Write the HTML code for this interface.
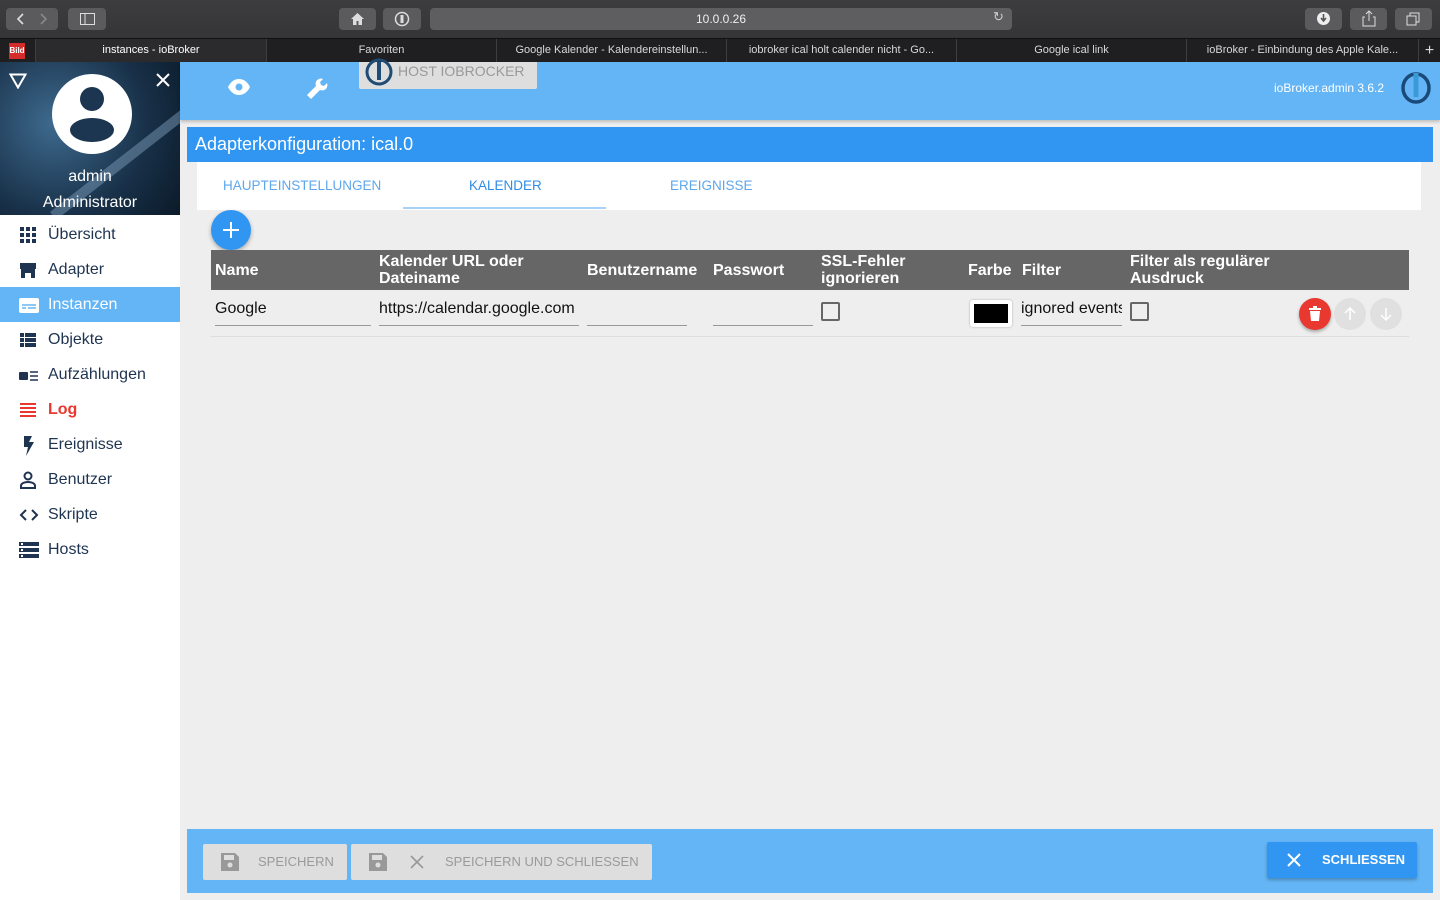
<!DOCTYPE html>
<html><head><meta charset="utf-8"><style>
*{box-sizing:border-box;margin:0;padding:0}
body{width:1440px;height:900px;overflow:hidden;background:#eeeeee;font-family:"Liberation Sans",sans-serif;position:relative}
.abs{position:absolute}
.tb{left:0;top:0;width:1440px;height:38px;background:linear-gradient(#3d3d3f,#353537)}
.btn{background:#5b5b5d;border-radius:4px;height:22px;top:8px}
.tabs{left:0;top:38px;width:1440px;height:24px;background:#1f1f21;border-top:1px solid #111}
.tab{top:0;height:24px;color:#d8d8d8;font-size:11px;text-align:center;line-height:23px;border-left:1px solid #3e3e40}
.side{left:0;top:62px;width:180px;height:838px;background:#fff}
.hdr{left:0;top:0;width:180px;height:153px;background:radial-gradient(circle at 30% 40%,#3e6a8e,#183048 60%,#0b1a28);overflow:hidden}
.mi{left:0;width:180px;height:35px;font-size:16px;color:#1e3450;line-height:35px;padding-left:48px}
.mi svg{position:absolute;left:19px;top:9px}
.appbar{left:180px;top:62px;width:1260px;height:58px;background:#64b5f6;box-shadow:0 2px 3px rgba(0,0,0,.2)}
.th{color:#fff;font-weight:bold;font-size:16px;line-height:17px;top:250px;height:40px;display:flex;align-items:center}
.inp{border-bottom:1px solid #999;height:36px;top:290px;font-size:16px;line-height:38px;color:#111;white-space:nowrap;overflow:hidden}
.cb{width:19px;height:19px;border:2px solid #666;border-radius:2px;top:302px}
.fb{background:#dedede;border-radius:2px;height:36px;top:844px;color:#9a9a9a;font-size:13px;line-height:36px}
</style></head><body>
<div class="abs tb">
 <div class="abs btn" style="left:6px;width:52px"></div>
 <svg class="abs" style="left:14px;top:12px" width="40" height="14"><path d="M9 2L4 7l5 5" stroke="#ddd" stroke-width="1.6" fill="none"/><path d="M27 2l5 5-5 5" stroke="#888" stroke-width="1.6" fill="none"/></svg>
 <div class="abs btn" style="left:68px;width:38px"></div>
 <svg class="abs" style="left:80px;top:13px" width="15" height="12"><rect x=".5" y=".5" width="14" height="11" fill="none" stroke="#ddd"/><line x1="5" y1="0" x2="5" y2="12" stroke="#ddd"/></svg>
 <div class="abs btn" style="left:339px;width:37px"></div>
 <svg class="abs" style="left:350px;top:12px" width="15" height="14"><path d="M7.5 1L1 7h2v6h3.5V9h2v4H12V7h2z" fill="#ddd"/></svg>
 <div class="abs btn" style="left:383px;width:38px"></div>
 <svg class="abs" style="left:394px;top:11px" width="16" height="16"><circle cx="8" cy="8" r="6.5" fill="none" stroke="#ddd" stroke-width="1.5"/><rect x="6.5" y="4" width="3" height="8" fill="#ddd"/></svg>
 <div class="abs btn" style="left:430px;width:582px;background:#5e5e60"></div>
 <div class="abs" style="left:430px;width:582px;top:8px;line-height:22px;text-align:center;color:#eee;font-size:12px">10.0.0.26</div>
 <div class="abs" style="left:993px;top:9px;color:#ccc;font-size:13px">↻</div>
 <div class="abs btn" style="left:1305px;width:37px"></div>
 <svg class="abs" style="left:1316px;top:11px" width="15" height="15"><circle cx="7.5" cy="7.5" r="6.5" fill="#eee"/><path d="M7.5 3v6M5 7l2.5 3 2.5-3" stroke="#555" stroke-width="1.6" fill="none"/></svg>
 <div class="abs btn" style="left:1350px;width:37px"></div>
 <svg class="abs" style="left:1362px;top:10px" width="14" height="17"><path d="M7 1v10M4 4l3-3 3 3M3 7H1v9h12V7h-2" stroke="#ddd" fill="none"/></svg>
 <div class="abs btn" style="left:1395px;width:37px"></div>
 <svg class="abs" style="left:1406px;top:12px" width="15" height="14"><rect x="1" y="4" width="9" height="9" fill="none" stroke="#ddd"/><path d="M4 4V1h9v9h-3" fill="none" stroke="#ddd"/></svg>
</div>
<div class="abs tabs">
 <div class="abs" style="left:9px;top:4px;width:16px;height:16px;background:#d42b2b;color:#fff;font-size:8px;font-weight:bold;text-align:center;line-height:16px">Bild</div>
 <div class="abs tab" style="left:35px;width:231px;background:#2b2b2d;color:#fff">instances - ioBroker</div>
 <div class="abs tab" style="left:266px;width:230px">Favoriten</div>
 <div class="abs tab" style="left:496px;width:230px">Google Kalender - Kalendereinstellun...</div>
 <div class="abs tab" style="left:726px;width:230px">iobroker ical holt calender nicht - Go...</div>
 <div class="abs tab" style="left:956px;width:230px">Google ical link</div>
 <div class="abs tab" style="left:1186px;width:232px">ioBroker - Einbindung des Apple Kale...</div>
 <div class="abs tab" style="left:1418px;width:22px;font-size:16px">+</div>
</div>
<div class="abs side">
 <div class="abs hdr">
  <div class="abs" style="left:50px;width:260px;height:10px;background:#7a9ab5;transform:rotate(-38deg);transform-origin:0 0;top:150px;opacity:.5"></div>
  <svg class="abs" style="left:9px;top:11px" width="18" height="16"><path d="M1.5 1.5h15L9 14.5z" fill="none" stroke="#fff" stroke-width="2"/></svg>
  <svg class="abs" style="left:155px;top:10px" width="16" height="16"><path d="M2 2l12 12M14 2L2 14" stroke="#fff" stroke-width="2"/></svg>
  <svg class="abs" style="left:52px;top:12px" width="80" height="80"><circle cx="40" cy="40" r="40" fill="#fff"/><circle cx="40" cy="25" r="12" fill="#1c3550"/><ellipse cx="40" cy="56" rx="22" ry="12" fill="#1c3550"/></svg>
  <div class="abs" style="left:0;width:180px;top:106px;text-align:center;color:#fff;font-size:16px">admin</div>
  <div class="abs" style="left:0;width:180px;top:132px;text-align:center;color:#fff;font-size:16px">Administrator</div>
 </div>
 <div class="abs mi" style="top:155px"><svg width="18" height="18"><g fill="#1e3450"><rect x="1" y="1" width="4" height="4"/><rect x="7" y="1" width="4" height="4"/><rect x="13" y="1" width="4" height="4"/><rect x="1" y="7" width="4" height="4"/><rect x="7" y="7" width="4" height="4"/><rect x="13" y="7" width="4" height="4"/><rect x="1" y="13" width="4" height="4"/><rect x="7" y="13" width="4" height="4"/><rect x="13" y="13" width="4" height="4"/></g></svg>Übersicht</div>
 <div class="abs mi" style="top:190px"><svg width="18" height="18"><path d="M1 2h16v6H1zM2 8h14v9h-4v-5H6v5H2z" fill="#1e3450"/></svg>Adapter</div>
 <div class="abs mi" style="top:225px;background:#64b5f6;color:#fff"><svg width="20" height="18"><rect x="0" y="2" width="20" height="15" rx="2" fill="#fff"/><path d="M3 9h14M3 12h4M9 12h8" stroke="#64b5f6" stroke-width="1.5"/></svg>Instanzen</div>
 <div class="abs mi" style="top:260px"><svg width="18" height="18"><g fill="#1e3450"><rect x="1" y="2" width="4" height="4"/><rect x="6" y="2" width="11" height="4"/><rect x="1" y="7" width="4" height="4"/><rect x="6" y="7" width="11" height="4"/><rect x="1" y="12" width="4" height="4"/><rect x="6" y="12" width="11" height="4"/></g></svg>Objekte</div>
 <div class="abs mi" style="top:295px"><svg width="20" height="18"><rect x="0" y="6" width="9" height="8" rx="1" fill="#1e3450"/><path d="M11 6h8M11 10h8M11 14h8" stroke="#1e3450" stroke-width="1.5"/></svg>Aufzählungen</div>
 <div class="abs mi" style="top:330px;color:#e8382f;font-weight:bold"><svg width="18" height="18"><path d="M1 3h16M1 7h16M1 11h16M1 15h16" stroke="#e8382f" stroke-width="2"/></svg>Log</div>
 <div class="abs mi" style="top:365px"><svg width="18" height="20"><path d="M5 0h8l-3 6h5L7 20l2-9H5z" fill="#1e3450"/></svg>Ereignisse</div>
 <div class="abs mi" style="top:400px"><svg width="18" height="18"><circle cx="9" cy="5" r="3.5" fill="none" stroke="#1e3450" stroke-width="2"/><path d="M2 17v-2c0-3 4-4 7-4s7 1 7 4v2z" fill="none" stroke="#1e3450" stroke-width="2"/></svg>Benutzer</div>
 <div class="abs mi" style="top:435px"><svg width="20" height="18"><path d="M7 4L2 9l5 5M13 4l5 5-5 5" fill="none" stroke="#1e3450" stroke-width="2"/></svg>Skripte</div>
 <div class="abs mi" style="top:470px"><svg width="20" height="18"><g fill="#1e3450"><rect x="0" y="1" width="20" height="4"/><rect x="0" y="7" width="20" height="4"/><rect x="0" y="13" width="20" height="4"/></g><g fill="#fff"><rect x="2" y="2" width="2" height="2"/><rect x="2" y="8" width="2" height="2"/><rect x="2" y="14" width="2" height="2"/></g></svg>Hosts</div>
</div>
<div class="abs appbar">
 <svg class="abs" style="left:47px;top:16px" width="24" height="18"><path d="M1 9C4 3 8 1 12 1s8 2 11 8c-3 6-7 8-11 8S4 15 1 9z" fill="#fff"/><circle cx="12" cy="9" r="3.5" fill="#64b5f6"/></svg>
 <svg class="abs" style="left:124px;top:14px" width="24" height="24"><path d="M3 19l9-9c-1-3 0-6 3-7 2-1 3 0 4 0l-3 3 1 3 3 1 3-3c0 1 1 2 0 4-1 3-4 4-7 3l-9 9z" fill="#fff"/></svg>
 <div class="abs" style="left:179px;top:0;width:178px;height:27px;background:#dedede;border-radius:0 0 2px 2px"></div>
 <svg class="abs" style="left:185px;top:-4px" width="28" height="28"><circle cx="14" cy="14" r="12" fill="none" stroke="#1e4c75" stroke-width="3"/><rect x="12" y="4" width="4" height="18" fill="#1e4c75"/></svg>
 <div class="abs" style="left:218px;top:1px;font-size:14px;color:#999">HOST IOBROCKER</div>
 <div class="abs" style="left:1094px;top:19px;font-size:12px;color:#fff">ioBroker.admin 3.6.2</div>
 <svg class="abs" style="left:1220px;top:9px" width="32" height="34"><ellipse cx="16" cy="17" rx="13" ry="14" fill="none" stroke="#1a4a78" stroke-width="3.5"/><rect x="13.5" y="2" width="5" height="24" fill="#3a9ad8"/></svg>
</div>
<div class="abs" style="left:187px;top:127px;width:1246px;height:35px;background:#3196f2;color:#fff;font-size:18px;line-height:35px;padding-left:8px">Adapterkonfiguration: ical.0</div>
<div class="abs" style="left:197px;top:162px;width:1224px;height:48px;background:#fff"></div>
<div class="abs" style="left:223px;top:178px;font-size:13.5px;color:#5ea7ec">HAUPTEINSTELLUNGEN</div>
<div class="abs" style="left:469px;top:178px;font-size:13.5px;color:#2f8de8">KALENDER</div>
<div class="abs" style="left:670px;top:178px;font-size:13.5px;color:#5ea7ec">EREIGNISSE</div>
<div class="abs" style="left:403px;top:207px;width:203px;height:2px;background:#a8d1f7"></div>
<div class="abs" style="left:211px;top:210px;width:40px;height:40px;border-radius:50%;background:#3196f2;box-shadow:0 2px 4px rgba(0,0,0,.3)"></div>
<svg class="abs" style="left:221px;top:220px" width="20" height="20"><path d="M10 2v16M2 10h16" stroke="#fff" stroke-width="2"/></svg>
<div class="abs" style="left:211px;top:250px;width:1198px;height:40px;background:#666"></div>
<div class="abs th" style="left:215px">Name</div>
<div class="abs th" style="left:379px">Kalender URL oder<br>Dateiname</div>
<div class="abs th" style="left:587px">Benutzername</div>
<div class="abs th" style="left:713px">Passwort</div>
<div class="abs th" style="left:821px">SSL-Fehler<br>ignorieren</div>
<div class="abs th" style="left:968px">Farbe</div>
<div class="abs th" style="left:1022px">Filter</div>
<div class="abs th" style="left:1130px">Filter als regulärer<br>Ausdruck</div>
<div class="abs inp" style="left:215px;width:156px">Google</div>
<div class="abs inp" style="left:379px;width:200px">https://calendar.google.com</div>
<div class="abs inp" style="left:587px;width:100px"></div>
<div class="abs inp" style="left:713px;width:100px"></div>
<div class="abs cb" style="left:821px"></div>
<div class="abs" style="left:970px;top:300px;width:42px;height:27px;background:#fff;border-radius:3px;box-shadow:0 0 2px #aaa;padding:4px"><div style="background:#000;width:100%;height:100%"></div></div>
<div class="abs inp" style="left:1021px;width:101px">ignored events</div>
<div class="abs cb" style="left:1130px"></div>
<div class="abs" style="left:1299px;top:298px;width:32px;height:32px;border-radius:50%;background:#e8382f;box-shadow:0 2px 3px rgba(0,0,0,.3)"></div>
<svg class="abs" style="left:1308px;top:306px" width="14" height="16"><rect x="1" y="2" width="12" height="2" fill="#fff"/><rect x="5" y="0" width="4" height="2" fill="#fff"/><path d="M2 5h10l-1 10H3z" fill="#fff"/></svg>
<div class="abs" style="left:1334px;top:298px;width:32px;height:32px;border-radius:50%;background:#e0e0e0"></div>
<div class="abs" style="left:1370px;top:298px;width:32px;height:32px;border-radius:50%;background:#e0e0e0"></div>
<svg class="abs" style="left:1342px;top:306px" width="16" height="16"><path d="M8 14V2M3 7l5-5 5 5" stroke="#fff" stroke-width="1.5" fill="none"/></svg>
<svg class="abs" style="left:1378px;top:306px" width="16" height="16"><path d="M8 2v12M3 9l5 5 5-5" stroke="#fff" stroke-width="1.5" fill="none"/></svg>
<div class="abs" style="left:211px;top:336px;width:1198px;height:1px;background:#ddd"></div>
<div class="abs" style="left:187px;top:829px;width:1246px;height:64px;background:#64b5f6"></div>
<div class="abs fb" style="left:203px;width:144px"><svg class="abs" style="left:18px;top:9px" width="18" height="18"><path d="M0 0h14l4 4v14H0z" fill="#999"/><rect x="3" y="2" width="10" height="5" fill="#dedede"/><circle cx="9" cy="12" r="2.5" fill="#dedede"/></svg><span class="abs" style="left:55px">SPEICHERN</span></div>
<div class="abs fb" style="left:351px;width:301px"><svg class="abs" style="left:18px;top:9px" width="18" height="18"><path d="M0 0h14l4 4v14H0z" fill="#999"/><rect x="3" y="2" width="10" height="5" fill="#dedede"/><circle cx="9" cy="12" r="2.5" fill="#dedede"/></svg><svg class="abs" style="left:59px;top:11px" width="14" height="14"><path d="M1 1l12 12M13 1L1 13" stroke="#999" stroke-width="1.6"/></svg><span class="abs" style="left:94px">SPEICHERN UND SCHLIESSEN</span></div>
<div class="abs" style="left:1267px;top:842px;width:150px;height:36px;background:#3196f2;border-radius:2px;box-shadow:0 2px 3px rgba(0,0,0,.25);color:#fff;font-size:13px;font-weight:bold;line-height:36px"><svg class="abs" style="left:20px;top:11px" width="14" height="14"><path d="M1 1l12 12M13 1L1 13" stroke="#fff" stroke-width="2"/></svg><span class="abs" style="left:55px">SCHLIESSEN</span></div>
</body></html>
